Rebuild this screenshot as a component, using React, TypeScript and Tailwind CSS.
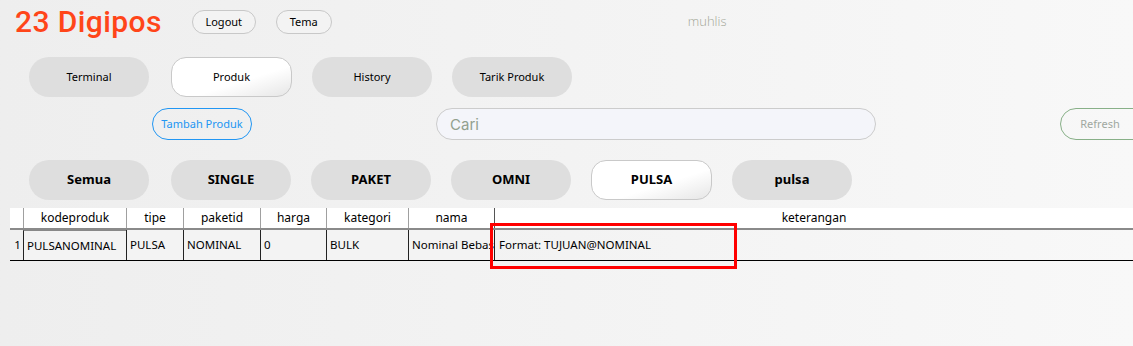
import React from "react";

const navItems = ["Terminal", "Produk", "History", "Tarik Produk"];
const filters = ["Semua", "SINGLE", "PAKET", "OMNI", "PULSA", "pulsa"];

const columns = [
    { key: "kodeproduk", width: "w-[103px]" },
    { key: "tipe", width: "w-[57px]" },
    { key: "paketid", width: "w-[77px]" },
    { key: "harga", width: "w-[66px]" },
    { key: "kategori", width: "w-[82px]" },
    { key: "nama", width: "w-[86px]" },
];

const row = ["PULSANOMINAL", "PULSA", "NOMINAL", "0", "BULK", "Nominal Bebas"];

function PillButton({ label, active, bold }: { label: string; active?: boolean; bold?: boolean }) {
    return (
        <button
            className={
                active
                    ? "flex h-10 w-[121px] shrink-0 items-center justify-center rounded-[15px] border border-[#c9c9c9] bg-gradient-to-br from-white from-60% to-[#e6e6e6] text-black"
                    : "flex h-10 w-[120px] shrink-0 items-center justify-center rounded-full bg-[#dedede] text-black"
            }
        >
            <span className={bold ? "text-[13px] font-bold" : "text-[11px]"}>{label}</span>
        </button>
    );
}

export default function App() {
    return (
        <div className="relative h-[346px] w-full overflow-hidden bg-gradient-to-r from-[#eeeeee] to-[#f8f8f8] font-['Noto_Sans',sans-serif]">
            {/* header */}
            <div className="flex h-[46px] items-center pl-[15px] pb-[2px]">
                <h1 className="shrink-0 font-['Roboto',sans-serif] text-[30px] font-medium leading-none tracking-[0.4px] text-[#ff4519]">
                    23 Digipos
                </h1>
                <button className="ml-[30px] flex h-[24px] w-[64px] shrink-0 items-center justify-center rounded-full border border-[#c8c8c8] bg-[#f3f3f3] text-[11px] text-black">
                    Logout
                </button>
                <button className="ml-[20px] flex h-[24px] w-[56px] shrink-0 items-center justify-center rounded-full border border-[#c8c8c8] bg-[#f3f3f3] text-[11px] text-black">
                    Tema
                </button>
                <span className="ml-[356px] font-['Open_Sans',sans-serif] text-[13px] font-light text-[#a3a797]">muhlis</span>
            </div>

            {/* nav */}
            <div className="mt-[11px] flex gap-[20px] pl-[29px]">
                {navItems.map((n, i) => (
                    <div key={n} className={i === 1 ? "ml-[2px]" : ""}>
                        <PillButton label={n} active={n === "Produk"} />
                    </div>
                ))}
            </div>

            {/* actions */}
            <div className="mt-[11px] flex h-[32px] items-center">
                <button className="ml-[152px] flex h-[32px] w-[100px] shrink-0 items-center justify-center rounded-full border border-[#2196f3] text-[11px] text-[#2196f3]">
                    Tambah Produk
                </button>
                <input
                    placeholder="Cari"
                    className="ml-[184px] h-[32px] w-[440px] shrink-0 rounded-full border border-[#cccccc] bg-[#f4f5fa] px-[13px] font-['Inter',sans-serif] text-[15px] placeholder:text-[#92a08e] focus:outline-none"
                />
                <button className="ml-[184px] flex h-[32px] w-[90px] shrink-0 items-center justify-center rounded-full border border-[#88b088] pr-[10px] text-[11px] text-[#a0a8a0]">
                    Refresh
                </button>
            </div>

            {/* filters */}
            <div className="mt-[20px] flex gap-[20px] pl-[29px]">
                {filters.map((f, i) => (
                    <div key={f} className={i === 1 ? "ml-[2px]" : ""}>
                        <PillButton label={f} active={f === "PULSA"} bold />
                    </div>
                ))}
            </div>

            {/* table */}
            <div className="ml-[10px] mt-[8px] text-[11.5px] text-black">
                <div className="flex h-[22px] border-b-2 border-b-[#8a8a8a] bg-white text-[12px]">
                    <div className="w-[13px] shrink-0" />
                    {columns.map((c) => (
                        <div key={c.key} className={`${c.width} flex shrink-0 items-center justify-center border-l border-[#a0a0a0]`}>
                            {c.key}
                        </div>
                    ))}
                    <div className="flex flex-1 items-center justify-center border-l border-[#555]">keterangan</div>
                </div>
                <div className="flex h-[31px] border-b border-black">
                    <div className="flex w-[13px] shrink-0 items-center justify-center bg-[#f0f0f0] pl-[2px]">1</div>
                    {row.map((v, i) => (
                        <div
                            key={i}
                            className={`${columns[i].width} flex shrink-0 items-center overflow-hidden whitespace-nowrap border-l border-[#222] bg-[#f3f3f3] pl-[3px] ${i === 0 ? "border-t border-t-[#888]" : ""}`}
                        >
                            {v}
                        </div>
                    ))}
                    <div className="flex flex-1 items-center border-l border-[#222] pl-[4px]">Format: TUJUAN@NOMINAL</div>
                </div>
            </div>

            {/* highlight */}
            <div className="absolute left-[490px] top-[223px] h-[46px] w-[247px] border-[3px] border-[#ff0000]" />
        </div>
    );
}
